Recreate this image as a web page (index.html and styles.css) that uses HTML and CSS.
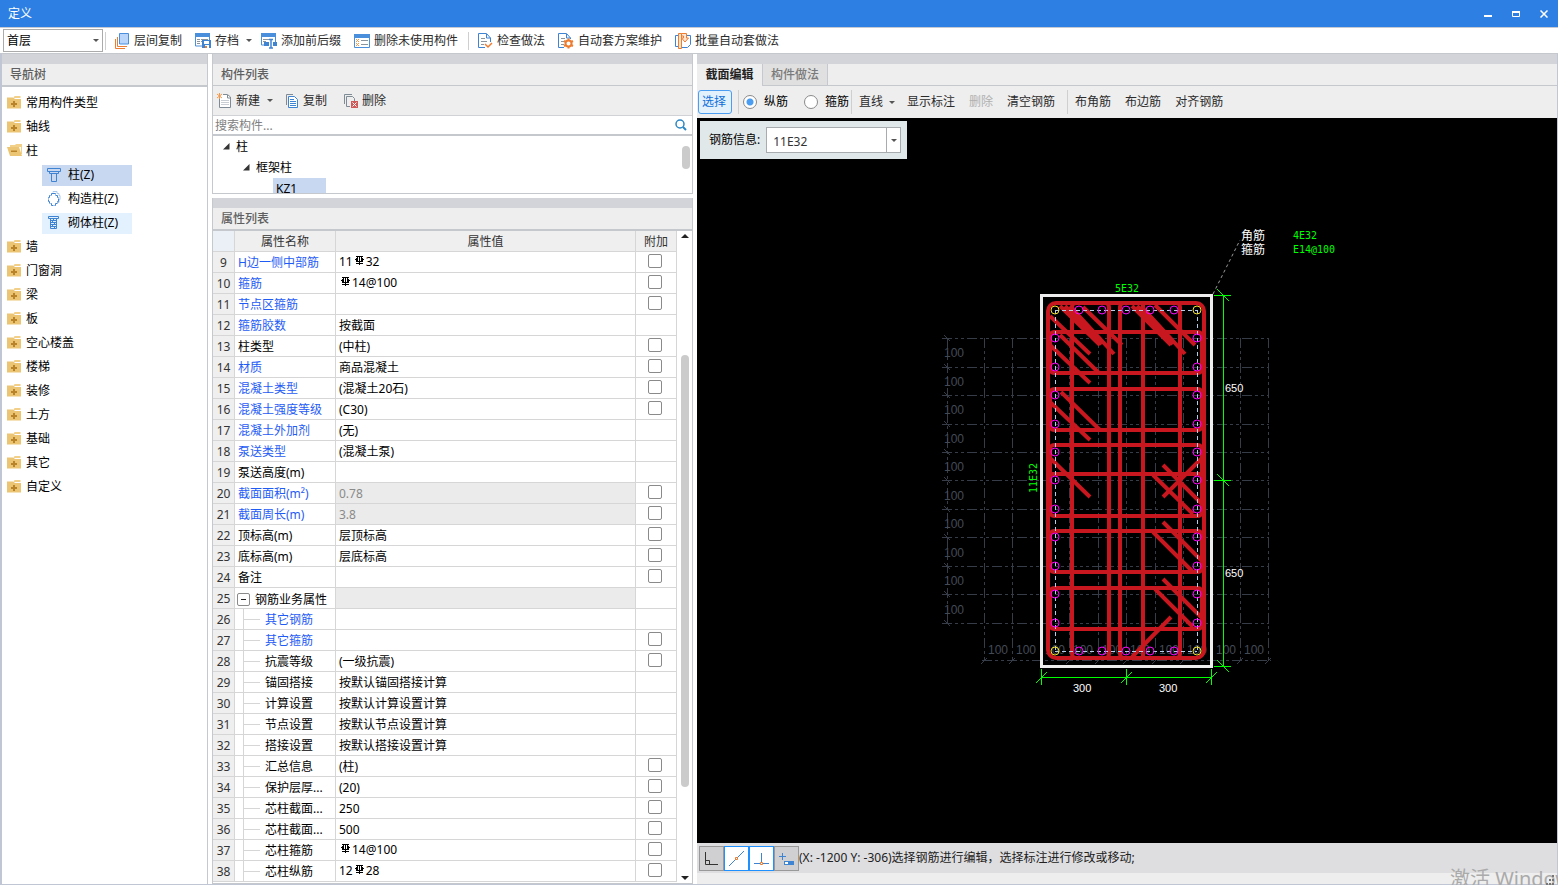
FILE: index.html
```html
<!DOCTYPE html>
<html lang="zh-CN">
<head>
<meta charset="utf-8">
<title>定义</title>
<link rel="stylesheet" href="styles.css">
</head>
<body>
<svg class="defs" aria-hidden="true">
  <symbol id="folder" viewBox="0 1 14 14"><path fill="#f2d08a" d="M7 1.500L8 .5h5.500V3H7z"/><path fill="#ecc574" d="M0 2.500h6.500L8 4h6v9.500H0z"/><path fill="#f2d08a" d="M7 2h6v1H8z"/><path fill="#b9832a" d="M6 6h2v2h2v2H8v2H6v-2H4V8h2z"/></symbol>
  <symbol id="folder-open" viewBox="0 1 16 14"><path fill="#f2d08a" d="M3 2h5l1-1h6v10h-1V4H3z"/><path fill="#ecc574" d="M0 4h12l3 9H3z"/><path fill="#b9832a" d="M4 7.500h6v1.500H4z"/></symbol>
  <symbol id="rebar" viewBox="0 0 9 9"><g fill="none" stroke="#000" shape-rendering="crispEdges"><path d="M1 .5h7M4.500 0v9M1 7.500h7M2.500 1v5M6.500 1v5M0 3.500h1M8 3.500h1M1.500 2v4M7.500 2v4M2 5.500h5"/></g></symbol>
</svg>
<div class="app">
  <header class="titlebar">
    <h1>定义</h1>
    <div class="window-controls">
      <button aria-label="最小化"><svg width="8" height="8"><path d="M0 6h8" stroke="#fff" stroke-width="2"/></svg></button>
      <button aria-label="最大化"><svg width="8" height="8"><path d="M.5 1.500h7v5h-7z" fill="none" stroke="#fff"/><path d="M0 2h8" stroke="#fff" stroke-width="2"/></svg></button>
      <button aria-label="关闭"><svg width="8" height="8"><path d="M.5 .5l7 7M7.500 .5l-7 7" stroke="#fff" stroke-width="1.500"/></svg></button>
    </div>
  </header>

  <div class="toolbar main-toolbar">
    <div class="floor-select"><select aria-label="楼层"><option>首层</option></select><i class="caret"></i></div>
    <i class="sep"></i>
    <button class="tool"><svg width="16" height="16"><path d="M1.500 6v9.500H11M3.500 4v9.500H13" fill="none" stroke="#ed7d31"/><path d="M5.500 .5h9v10.500h-9z" fill="#b9d6fa" stroke="#4a8fdc"/></svg>层间复制</button>
    <button class="tool drop"><svg width="16" height="16"><path d="M.5 .5h14V13H.5z" fill="#fff" stroke="#4a8fdc"/><path d="M0 0h15v4H0z" fill="#4a8fdc"/><path d="M2 6.500h3M6 6.500h7M2 8.500h3M2 10.500h3M6 8.500h1" stroke="#8a949c"/><path d="M7 7h9v8H7z" fill="#3f83d3"/><path d="M9 8h5v3H9z" fill="#fff"/><path d="M10 12h4v3h-4z" fill="#fff"/><path d="M10 13h2v2h-2z" fill="#ed7d31"/></svg>存档<i class="caret"></i></button>
    <button class="tool"><svg width="16" height="16"><path d="M.5 .5h14V12H.5z" fill="#fff" stroke="#4a8fdc"/><path d="M0 0h15v4H0z" fill="#4a8fdc"/><path d="M2 6.500h7M2 8.500h3" stroke="#8a949c"/><path d="M3 9h5v4H3zM12 9h4v4h-4z" fill="#3f83d3"/><path d="M8 6h4v9H8z" fill="#fff"/><path d="M8 6.500h4M10 6v9M8 15h4" stroke="#3f83d3" stroke-width="1.500"/></svg>添加前后缀</button>
    <button class="tool"><svg width="16" height="16"><path d="M.5 1.500h15v13H.5z" fill="#fff" stroke="#4a8fdc"/><path d="M0 1h16v4H0z" fill="#4a8fdc"/><path d="M2 6l3 3M5 6L2 9M2 10l3 3M5 10l-3 3" stroke="#f2994a"/><path d="M7 7.500h7M7 11.500h7" stroke="#8a949c"/></svg>删除未使用构件</button>
    <i class="sep"></i>
    <button class="tool check"><svg width="15" height="16"><path d="M12.500 9V5l-4-4.500H.5v14H7M8.500 1v4h4" fill="none" stroke="#3f83d3"/><path d="M3 5.500h4M3 8.500h6M3 11.500h3" stroke="#8a949c"/><path d="M7 11l3 3 4-4" fill="none" stroke="#ed7d31" stroke-width="1.500"/></svg>检查做法</button>
    <button class="tool"><svg width="16" height="16"><path d="M12.500 6V5l-4-4.500H.5v14H6M8.500 1v4h4" fill="none" stroke="#3f83d3"/><path d="M3 5.500h4M3 8.500h3M3 11.500h3" stroke="#8a949c"/><circle cx="10.500" cy="10.500" r="3" fill="#fff" stroke="#ed7d31" stroke-width="2"/><path d="M10.500 5.500v2M10.500 13.500v2M6 8l2 1M13 12l2 1M6 13l2-1M13 9l2-1" stroke="#ed7d31" stroke-width="2"/></svg>自动套方案维护</button>
    <button class="tool"><svg width="16" height="16"><path d="M3 2.500H.5v11H3M11 2.500h4.500v9l-3 3H7" fill="#fff" stroke="#3f83d3"/><path d="M3.500 .5h3v15h-3z" fill="#fde6d2" stroke="#ed7d31"/><path d="M6.500 .5h5V5h2l-3.500 4L6.500 5h2V3h-2z" fill="#fde6d2" stroke="#ed7d31"/></svg>批量自动套做法</button>
  </div>

  <main class="workspace">
    <nav class="panel nav-panel">
      <h2 class="panel-title thick">导航树</h2>
      <ul class="nav-tree">
        <li><svg class="fold"><use href="#folder"/></svg>常用构件类型</li>
        <li><svg class="fold"><use href="#folder"/></svg>轴线</li>
        <li><svg class="fold open"><use href="#folder-open"/></svg>柱</li>
        <li class="leaf"><a href="#z" class="selected"><svg width="14" height="16"><path d="M.5 1.500h13v3H.5zM2.500 4.500h9v2h-9zM4.500 6.500h5v8h-5z" fill="none" stroke="#3f83d3"/></svg>柱(Z)</a></li>
        <li class="leaf"><a href="#gz"><svg width="14" height="16"><path d="M6 1.500V.5h4v2h2v2h1v4h-1v3h-2" fill="none" stroke="#a9c8ee"/><path d="M4.500 2.500h4v2h2v2h1v4h-1v2h-2v2h-4v-2h-2v-2h-1v-4h1v-2h2z" fill="#fff" stroke="#3f83d3" stroke-dasharray="5 1"/></svg>构造柱(Z)</a></li>
        <li class="leaf"><a href="#qt" class="hover"><svg width="14" height="16"><path d="M1.500 1.500h10v2h-10zM3.500 3.500h6v10h-6zM3 5.500h7M3 7.500h7M3 9.500h7M3 11.500h7M6.500 4v2M5.500 6v2M7.500 8v2M5.500 10v2M7.500 12v2" fill="none" stroke="#3f83d3"/></svg>砌体柱(Z)</a></li>
        <li><svg class="fold"><use href="#folder"/></svg>墙</li>
        <li><svg class="fold"><use href="#folder"/></svg>门窗洞</li>
        <li><svg class="fold"><use href="#folder"/></svg>梁</li>
        <li><svg class="fold"><use href="#folder"/></svg>板</li>
        <li><svg class="fold"><use href="#folder"/></svg>空心楼盖</li>
        <li><svg class="fold"><use href="#folder"/></svg>楼梯</li>
        <li><svg class="fold"><use href="#folder"/></svg>装修</li>
        <li><svg class="fold"><use href="#folder"/></svg>土方</li>
        <li><svg class="fold"><use href="#folder"/></svg>基础</li>
        <li><svg class="fold"><use href="#folder"/></svg>其它</li>
        <li><svg class="fold"><use href="#folder"/></svg>自定义</li>
      </ul>
    </nav>

    <div class="middle">
      <section class="panel">
        <h2 class="panel-title">构件列表</h2>
        <div class="toolbar list-toolbar">
          <button class="tool drop"><svg width="15" height="16"><path d="M2.500 5v9.500h11V4l-3-2.500H6" fill="#fff" stroke="#7f8c95"/><path d="M10.500 2v3h3" fill="none" stroke="#7f8c95"/><path d="M4 7.500h8M4 9.500h8M4 11.500h8" stroke="#c8ced3"/><path d="M0 1l5 4M5 1L0 5M2.500 0v6" stroke="#f2994a"/></svg>新建<i class="caret"></i></button>
          <button class="tool"><svg width="13" height="16"><path d="M.5 12V1.500H7" fill="none" stroke="#7f8c95"/><path d="M2.500 3.500h6l3 3v8h-9z" fill="#fff" stroke="#3f83d3"/><path d="M4 6.500h4M4 8.500h6M4 10.500h6M4 12.500h6" stroke="#3f83d3"/></svg>复制</button>
          <button class="tool"><svg width="14" height="16"><path d="M.5 11V1.500H8M6 13.500H2.500v-10h6l2 2V8" fill="none" stroke="#7f8c95"/><path d="M7 8h7v7H7z" fill="#d05a5a"/><path d="M8.500 9.500l4 4M12.500 9.500l-4 4" stroke="#fff"/></svg>删除</button>
        </div>
        <div class="search"><input type="text" aria-label="搜索构件" placeholder="搜索构件..."><svg width="12" height="12"><circle cx="5" cy="5" r="4" fill="none" stroke="#2d86c4" stroke-width="1.500"/><path d="M8 8l3 3" stroke="#2d86c4" stroke-width="2"/></svg></div>
        <div class="component-list">
          <ul>
            <li><svg width="7" height="7"><path d="M6.500 0v6.500H0z" fill="#333"/></svg>柱</li>
            <li class="lv2"><svg width="7" height="7"><path d="M6.500 0v6.500H0z" fill="#333"/></svg>框架柱</li>
            <li class="lv3"><span>KZ1</span></li>
          </ul>
          <i class="list-thumb"></i>
        </div>
      </section>

      <section class="panel props">
        <h2 class="panel-title thick">属性列表</h2>
        <div class="props-body">
          <div class="table-clip">
          <table>
            <colgroup><col class="c-no"><col class="c-name"><col><col class="c-add"></colgroup>
            <thead><tr><th class="corner"></th><th>属性名称</th><th>属性值</th><th>附加</th></tr></thead>
            <tbody>
              <tr><th>9</th><td class="key">H边一侧中部筋</td><td class="steel">11<svg class="rb"><use href="#rebar"/></svg>32</td><td><input type="checkbox" aria-label="附加 9"></td></tr>
              <tr><th>10</th><td class="key">箍筋</td><td class="steel"><svg class="rb"><use href="#rebar"/></svg>14@100</td><td><input type="checkbox" aria-label="附加 10"></td></tr>
              <tr><th>11</th><td class="key">节点区箍筋</td><td></td><td><input type="checkbox" aria-label="附加 11"></td></tr>
              <tr><th>12</th><td class="key">箍筋胶数</td><td>按截面</td><td></td></tr>
              <tr><th>13</th><td>柱类型</td><td>(中柱)</td><td><input type="checkbox" aria-label="附加 13"></td></tr>
              <tr><th>14</th><td class="key">材质</td><td>商品混凝土</td><td><input type="checkbox" aria-label="附加 14"></td></tr>
              <tr><th>15</th><td class="key">混凝土类型</td><td>(混凝土20石)</td><td><input type="checkbox" aria-label="附加 15"></td></tr>
              <tr><th>16</th><td class="key">混凝土强度等级</td><td>(C30)</td><td><input type="checkbox" aria-label="附加 16"></td></tr>
              <tr><th>17</th><td class="key">混凝土外加剂</td><td>(无)</td><td></td></tr>
              <tr><th>18</th><td class="key">泵送类型</td><td>(混凝土泵)</td><td></td></tr>
              <tr><th>19</th><td>泵送高度(m)</td><td></td><td></td></tr>
              <tr><th>20</th><td class="key">截面面积(m²)</td><td class="locked">0.78</td><td><input type="checkbox" aria-label="附加 20"></td></tr>
              <tr><th>21</th><td class="key">截面周长(m)</td><td class="locked">3.8</td><td><input type="checkbox" aria-label="附加 21"></td></tr>
              <tr><th>22</th><td>顶标高(m)</td><td>层顶标高</td><td><input type="checkbox" aria-label="附加 22"></td></tr>
              <tr><th>23</th><td>底标高(m)</td><td>层底标高</td><td><input type="checkbox" aria-label="附加 23"></td></tr>
              <tr><th>24</th><td>备注</td><td></td><td><input type="checkbox" aria-label="附加 24"></td></tr>
              <tr><th>25</th><td class="group"><button aria-label="折叠"><svg width="11" height="11"><path d="M3 5.500h5" stroke="#222"/></svg></button>钢筋业务属性</td><td class="locked"></td><td></td></tr>
              <tr><th>26</th><td class="child key">其它钢筋</td><td></td><td></td></tr>
              <tr><th>27</th><td class="child key">其它箍筋</td><td></td><td><input type="checkbox" aria-label="附加 27"></td></tr>
              <tr><th>28</th><td class="child">抗震等级</td><td>(一级抗震)</td><td><input type="checkbox" aria-label="附加 28"></td></tr>
              <tr><th>29</th><td class="child">锚固搭接</td><td>按默认锚固搭接计算</td><td></td></tr>
              <tr><th>30</th><td class="child">计算设置</td><td>按默认计算设置计算</td><td></td></tr>
              <tr><th>31</th><td class="child">节点设置</td><td>按默认节点设置计算</td><td></td></tr>
              <tr><th>32</th><td class="child">搭接设置</td><td>按默认搭接设置计算</td><td></td></tr>
              <tr><th>33</th><td class="child">汇总信息</td><td>(柱)</td><td><input type="checkbox" aria-label="附加 33"></td></tr>
              <tr><th>34</th><td class="child">保护层厚...</td><td>(20)</td><td><input type="checkbox" aria-label="附加 34"></td></tr>
              <tr><th>35</th><td class="child">芯柱截面...</td><td>250</td><td><input type="checkbox" aria-label="附加 35"></td></tr>
              <tr><th>36</th><td class="child">芯柱截面...</td><td>500</td><td><input type="checkbox" aria-label="附加 36"></td></tr>
              <tr><th>37</th><td class="child">芯柱箍筋</td><td class="steel"><svg class="rb"><use href="#rebar"/></svg>14@100</td><td><input type="checkbox" aria-label="附加 37"></td></tr>
              <tr><th>38</th><td class="child">芯柱纵筋</td><td class="steel">12<svg class="rb"><use href="#rebar"/></svg>28</td><td><input type="checkbox" aria-label="附加 38"></td></tr>
            </tbody>
          </table>
          </div>
          <div class="scrollbar"><i class="up"></i><i class="space-top"></i><i class="thumb"></i><i class="space-bottom"></i><i class="down"></i></div>
        </div>
      </section>
    </div>

    <section class="panel editor">
      <div class="tabs"><button class="tab active">截面编辑</button><button class="tab">构件做法</button></div>
      <div class="toolbar edit-toolbar">
        <button class="pick">选择</button>
        <i class="sep"></i>
        <label><input type="radio" name="bar" checked>纵筋</label>
        <label><input type="radio" name="bar">箍筋</label>
        <i class="sep tight"></i>
        <button class="cmd drop">直线<i class="caret"></i></button>
        <button class="cmd">显示标注</button>
        <button class="cmd" disabled>删除</button>
        <button class="cmd">清空钢筋</button>
        <i class="sep wide"></i>
        <button class="cmd">布角筋</button>
        <button class="cmd">布边筋</button>
        <button class="cmd">对齐钢筋</button>
      </div>
      <div class="canvas">
        <svg class="drawing" role="img" aria-label="柱截面">
          <g transform="translate(-697 -118)">
            <g class="grid">
              <path d="M942 338.500H1269M942 367.500H1269M942 395.500H1269M942 424.500H1269M942 452.500H1269M942 480.500H1269M942 509.500H1269M942 537.500H1269M942 566.500H1269M942 594.500H1269M942 623.500H1269"/>
              <path d="M984.500 338V661M1012.500 338V661M1069.500 338V661M1098.500 338V661M1126.500 338V661M1155.500 338V661M1183.500 338V661M1240.500 338V661M1268.500 338V661M947.500 338V625M982 660.500H1271"/>
            </g>
            <path class="grid-tick" d="M944 335l6 6M944 364l6 6M944 392l6 6M944 421l6 6M944 449l6 6M944 477l6 6M944 506l6 6M944 534l6 6M944 563l6 6M944 591l6 6M944 620l6 6M981 664l6-6M1009 664l6-6M1066 664l6-6M1095 664l6-6M1123 664l6-6M1152 664l6-6M1180 664l6-6M1237 664l6-6M1265 664l6-6"/>
            <g class="grid-text">
              <text x="944" y="357">100</text><text x="944" y="386">100</text><text x="944" y="414">100</text><text x="944" y="443">100</text><text x="944" y="471">100</text><text x="944" y="500">100</text><text x="944" y="528">100</text><text x="944" y="557">100</text><text x="944" y="585">100</text><text x="944" y="614">100</text>
              <text x="988" y="654">100</text><text x="1016" y="654">100</text><text x="1045" y="654">100</text><text x="1073" y="654">100</text><text x="1102" y="654">100</text><text x="1130" y="654">100</text><text x="1159" y="654">100</text><text x="1187" y="654">100</text><text x="1216" y="654">100</text><text x="1244" y="654">100</text>
            </g>
            <g class="stirrup">
              <rect x="1048" y="303" width="156" height="355" rx="8"/>
              <rect x="1072" y="303" width="37" height="355" rx="4"/>
              <rect x="1120" y="303" width="60" height="355" rx="4"/>
              <path d="M1143 303V658M1050 474H1202"/>
              <rect x="1050" y="332" width="152" height="41" rx="4"/>
              <rect x="1050" y="389" width="152" height="41" rx="4"/>
              <rect x="1050" y="445" width="152" height="71" rx="4"/>
              <rect x="1050" y="531" width="152" height="41" rx="4"/>
              <rect x="1050" y="588" width="152" height="41" rx="4"/>
              <path d="M1050 316L1090 354M1050 345L1090 383M1060 335L1099 373M1060 306L1100 345M1070 306L1114 354M1065 306L1102 344M1083 307L1122 345M1132 306L1171 345M1137 306L1173 344M1141 306L1185 354M1155 305L1195 345M1050 402L1090 440M1061 392L1100 430M1050 458L1090 497M1202 458L1163 497M1163 465L1202 504M1153 475L1193 514M1163 522L1202 561M1153 532L1192 571M1163 579L1202 618M1155 589L1193 627M1171 617L1132 657"/>
            </g>
            <path class="core" d="M1055.500 310V651M1197.500 310V651M1055 310.500H1197M1055 651.500H1197"/>
            <rect class="outline" x="1041.500" y="295.500" width="170" height="371"/>
            <g class="bar">
              <circle cx="1079" cy="310" r="4"/><circle cx="1102" cy="310" r="4"/><circle cx="1126" cy="310" r="4"/><circle cx="1150" cy="310" r="4"/><circle cx="1174" cy="310" r="4"/>
              <circle cx="1079" cy="651" r="4"/><circle cx="1102" cy="651" r="4"/><circle cx="1126" cy="651" r="4"/><circle cx="1150" cy="651" r="4"/><circle cx="1174" cy="651" r="4"/>
              <circle cx="1055" cy="338" r="4"/><circle cx="1055" cy="367" r="4"/><circle cx="1055" cy="395" r="4"/><circle cx="1055" cy="424" r="4"/><circle cx="1055" cy="452" r="4"/><circle cx="1055" cy="480" r="4"/><circle cx="1055" cy="509" r="4"/><circle cx="1055" cy="537" r="4"/><circle cx="1055" cy="566" r="4"/><circle cx="1055" cy="594" r="4"/><circle cx="1055" cy="623" r="4"/>
              <circle cx="1197" cy="338" r="4"/><circle cx="1197" cy="367" r="4"/><circle cx="1197" cy="395" r="4"/><circle cx="1197" cy="424" r="4"/><circle cx="1197" cy="452" r="4"/><circle cx="1197" cy="480" r="4"/><circle cx="1197" cy="509" r="4"/><circle cx="1197" cy="537" r="4"/><circle cx="1197" cy="566" r="4"/><circle cx="1197" cy="594" r="4"/><circle cx="1197" cy="623" r="4"/>
            </g>
            <g class="bar corner-bar"><circle cx="1055" cy="310" r="4"/><circle cx="1197" cy="310" r="4"/><circle cx="1055" cy="651" r="4"/><circle cx="1197" cy="651" r="4"/></g>
            <path class="dim" d="M1223.500 295V667M1214 295.500h17M1214 480.500h17M1214 666.500h17M1217 289l12 12M1217 474l12 12M1217 660l12 12M1041 677.500H1212M1041.500 669v16M1126.500 669v16M1211.500 669v16M1036 683l11-11M1121 683l11-11M1206 683l11-11"/>
            <path class="leader" d="M1213 294L1240 240"/>
            <g class="dim-text"><text x="1073" y="692">300</text><text x="1159" y="692">300</text><text x="1225" y="392">650</text><text x="1225" y="577">650</text></g>
            <g class="cn-text"><text x="1241" y="240">角筋</text><text x="1241" y="254">箍筋</text></g>
            <g class="bar-text"><text x="1293" y="239">4E32</text><text x="1293" y="253">E14@100</text><text x="1115" y="292">5E32</text><text transform="translate(1037 493) rotate(-90)">11E32</text></g>
          </g>
        </svg>
        <div class="rebar-box"><label for="info">钢筋信息:</label><div class="combo"><input id="info" type="text" value="11E32"><button aria-label="展开"><i class="caret"></i></button></div></div>
      </div>
      <div class="status">
        <button aria-label="正交"><svg width="21" height="21"><path d="M4.500 4v12.500H17M4.500 12.500h4v4" fill="none" stroke="#333"/></svg></button>
        <button class="on" aria-label="中点"><svg width="21" height="21"><path d="M3 18L18 3" stroke="#3f83d3"/><path d="M9.500 9.500h2v2h-2z" fill="#fff" stroke="#ed7d31"/></svg></button>
        <button class="on" aria-label="垂足"><svg width="21" height="21"><path d="M10.500 5v9M3 15.500h15" stroke="#3f83d3"/><path d="M9.500 14.500h2v2h-2z" fill="#fff" stroke="#ed7d31"/></svg></button>
        <button aria-label="动态输入"><svg width="21" height="21"><path d="M3 8.500h7M6.500 5v7" stroke="#3f83d3"/><path d="M8 13h10v4H8z" fill="#3f83d3"/><path d="M9 14h3v2H9z" fill="#fff"/></svg></button>
        <span>(X: -1200 Y: -306)选择钢筋进行编辑，选择标注进行修改或移动;</span>
      </div>
      <div class="footer"></div>
    </section>
  </main>
  <div class="watermark">激活 Windows</div>
  <svg class="grip" width="10" height="10"><path d="M7 0h2v2H7zM7 4h2v2H7zM7 8h2v2H7zM4 4h2v2H4zM4 8h2v2H4zM1 8h2v2H1z" fill="#777"/></svg>
</div>
</body>
</html>
```
FILE: styles.css
```css
* { box-sizing: border-box; }
body {
  margin: 0;
  font: 12px/16px "Noto Sans", "Noto Sans CJK SC", sans-serif;
  color: #000;
}
button, input, select { font: inherit; color: inherit; }
button { border: 0; padding: 0; background: none; }
h1, h2, ul { margin: 0; padding: 0; font-size: 12px; font-weight: normal; list-style: none; }
.defs { display: none; }

.app {
  position: relative;
  display: flex;
  flex-direction: column;
  height: 100vh;
  overflow: hidden;
  background: #fff;
}

.titlebar {
  display: flex;
  justify-content: space-between;
  align-items: center;
  height: 27px;
  padding: 1px 10px 0 8px;
  background: #2d7fe3;
  color: #fff;
}
.window-controls { display: flex; gap: 20px; }
.window-controls button { display: flex; }

.toolbar { display: flex; align-items: center; color: #2b2b2b; }
.main-toolbar {
  height: 27px;
  padding-left: 3px;
  border-top: 1px solid #c5c9d2;
  border-bottom: 1px solid #c5c8cc;
}
.floor-select { position: relative; }
.floor-select select {
  display: block;
  width: 100px;
  height: 23px;
  padding: 0 3px;
  border: 1px solid #ababab;
  border-radius: 0;
  background: #fff;
  color: #000;
  appearance: none;
}
.floor-select .caret { position: absolute; right: 4px; top: 10px; }
.caret {
  width: 0;
  height: 0;
  border: 3px solid transparent;
  border-top-color: #555;
  border-bottom: 0;
}
.sep { width: 1px; height: 18px; margin: 0 3px; background: #cfcfcf; }
.floor-select + .sep { margin: 0 2px; }
.tool {
  display: flex;
  align-items: center;
  gap: 4px;
  height: 22px;
  margin-right: 1px;
  padding: 0 6px;
  white-space: nowrap;
}
.tool .caret { margin-left: 3px; }
.tool.drop { padding-right: 2px; }

.workspace {
  flex: 1;
  min-height: 0;
  display: grid;
  grid-template-columns: 206px 481px minmax(0, 1fr);
  gap: 4px;
  border: solid #c0c6d4;
  border-width: 0 1px 1px 2px;
}
.panel {
  display: flex;
  flex-direction: column;
  min-width: 0;
  min-height: 0;
  border-right: 1px solid #c5c8cc;
}
.panel::before { content: ""; flex: none; height: 10px; background: #d3d4da; }
.panel-title {
  flex: none;
  height: 22px;
  padding: 3px 8px;
  border-bottom: 1px solid #c5c8cc;
  background: #eee;
  color: #5f5f5f;
  font-weight: 500;
}
.panel-title.thick { height: 23px; border-bottom-width: 2px; }

.nav-tree { padding-top: 4px; }
.nav-tree li { display: flex; align-items: center; height: 24px; padding-left: 5px; }
.fold { width: 14px; height: 14px; margin-right: 5px; }
.fold.open { width: 16px; margin-right: 3px; }
.nav-tree .leaf { padding-left: 40px; }
.leaf a {
  display: flex;
  align-items: center;
  gap: 7px;
  width: 90px;
  height: 21px;
  padding-left: 5px;
  color: #000;
  text-decoration: none;
}
.leaf .selected { background: #c8d8f0; }
.leaf .hover { background: #e3f1fe; }

.middle { display: flex; flex-direction: column; gap: 4px; min-width: 0; min-height: 0; }
.middle .panel { border-left: 1px solid #c5c8cc; }
.list-toolbar { height: 30px; padding-left: 3px; border-bottom: 1px solid #d0d2d6; background: #eee; }
.list-toolbar .tool { margin-right: 10px; padding: 0 6px 0 1px; gap: 4px; }
.list-toolbar .tool.drop { margin-right: 6px; }
.search { display: flex; align-items: center; height: 20px; border-bottom: 2px solid #c5c8cc; padding-right: 5px; }
.search input { flex: 1; min-width: 0; height: 18px; border: 0; padding: 0 2px; outline: 0; }
.search input::placeholder { color: #808080; }
.component-list {
  display: flex;
  justify-content: space-between;
  height: 58px;
  overflow: hidden;
  border-bottom: 1px solid #c5c8cc;
}
.component-list li { display: flex; align-items: center; gap: 6px; height: 21px; padding-left: 10px; }
.component-list .lv2 { padding-left: 30px; }
.component-list .lv3 { padding-left: 60px; }
.lv3 span { width: 53px; height: 21px; padding: 3px; background: #c8d8f0; }
.list-thumb { width: 8px; height: 23px; margin: 10px 2px; border-radius: 4px; background: #cbcbcb; }

.props { flex: 1; border-bottom: 1px solid #c5c8cc; }
.props-body { flex: 1; display: flex; min-height: 0; }
.table-clip { flex: 1; min-width: 0; overflow: hidden; }
table { width: 100%; table-layout: fixed; border-collapse: separate; border-spacing: 0; }
.c-no { width: 22px; }
.c-name { width: 101px; }
.c-add { width: 41px; }
th, td {
  height: 21px;
  padding: 2px 3px 0;
  border: solid #d6d6d6;
  border-width: 0 1px 1px 0;
  line-height: 16px;
  font-weight: normal;
  text-align: left;
  white-space: nowrap;
  overflow: hidden;
}
th { background: #efefef; color: #333; text-align: center; }
tbody th { padding: 2px 0 0; }
thead .corner { background: #eaf0f6; }
td.steel { padding-top: 0; }
td.key { color: #1f5cf5; }
td.locked { background: #ebebeb; color: #8a8a8a; }
td:last-child { padding: 0; line-height: 0; }
.rb { width: 9px; height: 9px; margin: 0 2px; vertical-align: 1px; }
td input[type="checkbox"] {
  display: block;
  width: 14px;
  height: 14px;
  margin: 0 12px 2px;
  border: 1px solid #8a8a8a;
  border-radius: 2px;
  background: #fff;
  appearance: none;
}
.group button {
  display: inline-block;
  width: 13px;
  height: 13px;
  margin-right: 5px;
  border: 1px solid #8a8a8a;
  border-radius: 2px;
  line-height: 0;
  vertical-align: -1px;
}
td.group { line-height: 15px; padding-left: 2px; }
td.child {
  padding-left: 30px;
  background:
    linear-gradient(#d6d6d6, #d6d6d6) 8px 0 / 1px 100% no-repeat,
    linear-gradient(#d6d6d6, #d6d6d6) 8px 10px / 17px 1px no-repeat;
}
.scrollbar { display: flex; flex-direction: column; align-items: center; width: 15px; padding: 3px 0; }
.up { border: 4px solid transparent; border-bottom-color: #222; border-top: 0; }
.down { border: 4px solid transparent; border-top-color: #222; border-bottom: 0; }
.space-top { flex: 117; }
.thumb { flex: 432; width: 8px; border-radius: 4px; background: #cbcbcb; }
.space-bottom { flex: 89; }

.panel.editor { border: 0; }
.tabs { display: flex; height: 22px; background: #eee; border-bottom: 1px solid #c5c8cc; }
.tab { width: 65px; border-right: 1px solid #c5c8cc; background: #e0e0e0; color: #7a7a7a; font-weight: 500; }
.tab.active { height: 22px; width: 66px; background: #eee; color: #222; font-weight: bold; }
.edit-toolbar { height: 32px; padding-left: 1px; background: #eee; white-space: nowrap; }
.pick {
  width: 34px;
  height: 24px;
  padding-right: 2px;
  border: 1px solid #4a9df0;
  border-radius: 3px;
  background: #e3f1fd;
  color: #0f6fd8;
}
.edit-toolbar .sep { height: 24px; margin: 0 4px 0 6px; }
.edit-toolbar .sep.tight { margin: 0 0 0 2px; }
.edit-toolbar .sep.wide { margin: 0 0 0 5px; }
.edit-toolbar label { display: flex; align-items: center; gap: 7px; margin-right: 16px; color: #000; }
.edit-toolbar label + label { margin-right: 0; }
.edit-toolbar label input {
  width: 14px;
  height: 14px;
  margin: 0;
  border: 1px solid #8a8a8a;
  border-radius: 50%;
  background: #fff;
  appearance: none;
}
.edit-toolbar label input:checked { background: radial-gradient(circle, #4a9df0 3px, #fff 4px); }
.cmd { display: flex; align-items: center; padding: 0 7px; }
.cmd .caret { margin: 0 -2px 0 6px; }
.cmd.drop { padding-right: 7px; }
.cmd:disabled { color: #b0b0b0; }

.canvas { position: relative; flex: 1; min-height: 0; background: #000; overflow: hidden; }
.drawing { display: block; width: 100%; height: 100%; }
.drawing * { fill: none; }
.grid { stroke: #363c48; stroke-dasharray: 10 3 3 3 3 3; shape-rendering: crispEdges; }
.grid-tick { stroke: #363c48; }
.drawing .grid-text text { fill: #444b57; font: 12px "Liberation Sans", sans-serif; }
.core { stroke: #b4cdea; stroke-dasharray: 4 3; shape-rendering: crispEdges; }
.stirrup { stroke: #c8171e; stroke-width: 4; }
.outline { stroke: #eee; stroke-width: 3; shape-rendering: crispEdges; }
.bar { stroke: #f0f; }
.corner-bar { stroke: #f2e02c; }
.dim { stroke: #0f0; shape-rendering: crispEdges; }
.leader { stroke: #999; stroke-dasharray: 3 3; }
.drawing .dim-text text { fill: #fff; font: 11px "Liberation Sans", sans-serif; }
.drawing .cn-text text { fill: #fff; font: 12px "Noto Sans CJK SC", sans-serif; }
.drawing .bar-text text { fill: #0f0; font: 10px "DejaVu Sans Mono", monospace; }

.rebar-box {
  position: absolute;
  left: 3px;
  top: 3px;
  display: flex;
  align-items: center;
  gap: 6px;
  height: 38px;
  padding: 0 6px 0 9px;
  background: #e0e8ea;
}
.combo { display: flex; width: 135px; height: 26px; border: 1px solid #a8acae; background: #fff; }
.combo input { flex: 1; min-width: 0; border: 0; padding: 3px 6px 0; background: none; color: #333; outline: 0; }
.combo button { display: grid; place-items: center; width: 14px; border-left: 1px solid #a8acae; }

.status { display: flex; align-items: center; height: 30px; padding-left: 2px; background: #dedee0; color: #222; white-space: nowrap; }
.status button {
  display: grid;
  place-items: center;
  width: 25px;
  height: 25px;
  border: 1px solid #999;
  background: #d0d0d2;
}
.status button.on { border-color: #1e90ff; background: #fff; }
.footer { height: 11px; background: #eee; }

.watermark {
  position: absolute;
  left: calc(100% - 108px);
  top: calc(100% - 20px);
  color: #aaa;
  font-size: 20px;
  line-height: 28px;
  white-space: nowrap;
}
.grip { position: absolute; right: 3px; bottom: 0; }
```
